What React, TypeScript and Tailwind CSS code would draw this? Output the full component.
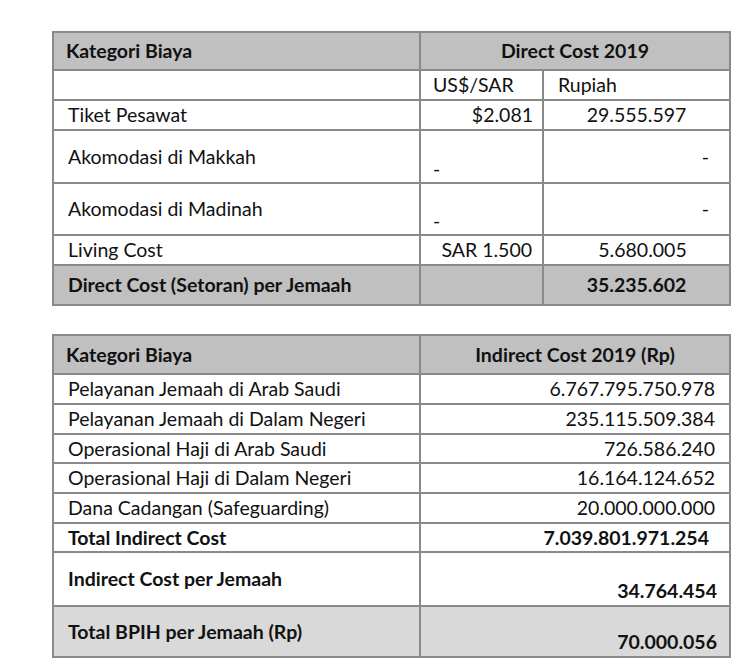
import React from "react";

type Row = { label: string; value: string; h: string };

const indirectRows: Row[] = [
  { label: "Pelayanan Jemaah di Arab Saudi", value: "6.767.795.750.978", h: "h-[30px]" },
  { label: "Pelayanan Jemaah di Dalam Negeri", value: "235.115.509.384", h: "h-[30px]" },
  { label: "Operasional Haji di Arab Saudi", value: "726.586.240", h: "h-[29px]" },
  { label: "Operasional Haji di Dalam Negeri", value: "16.164.124.652", h: "h-[30px]" },
  { label: "Dana Cadangan (Safeguarding)", value: "20.000.000.000", h: "h-[30px]" },
];

const cell = "border-2 border-[#8a8a8a] p-0";

export default function App() {
  return (
    <div
      className="w-[750px] h-[669px] bg-white text-[19.5px] leading-[1.2] text-[#111] pt-[31px] overflow-hidden"
      style={{ fontFamily: "Lato, 'Open Sans', sans-serif" }}
    >
      {/* Direct cost */}
      <table className="ml-[52px] w-[677px] border-collapse table-fixed">
        <colgroup>
          <col className="w-[367px]" />
          <col className="w-[123px]" />
          <col className="w-[187px]" />
        </colgroup>
        <tbody>
          <tr className="h-[38px] bg-[#c0c0c0] font-bold">
            <td className={`${cell} pl-3`}>Kategori Biaya</td>
            <td className={`${cell} text-center`} colSpan={2}>
              Direct Cost 2019
            </td>
          </tr>
          <tr className="h-[30px]">
            <td className={cell}></td>
            <td className={`${cell} pl-3`}>US$/SAR</td>
            <td className={`${cell} pl-[14px]`}>Rupiah</td>
          </tr>
          <tr className="h-[30px]">
            <td className={`${cell} pl-[14px]`}>Tiket Pesawat</td>
            <td className={`${cell} text-right pr-[9px]`}>$2.081</td>
            <td className={`${cell} text-center`}>29.555.597</td>
          </tr>
          <tr className="h-[53px]">
            <td className={`${cell} pl-[14px]`}>Akomodasi di Makkah</td>
            <td className={`${cell} pl-3 align-bottom pb-[2px]`}>-</td>
            <td className={`${cell} text-right pr-5`}>-</td>
          </tr>
          <tr className="h-[52px]">
            <td className={`${cell} pl-[14px]`}>Akomodasi di Madinah</td>
            <td className={`${cell} pl-3 align-bottom pb-[2px]`}>-</td>
            <td className={`${cell} text-right pr-5`}>-</td>
          </tr>
          <tr className="h-[30px]">
            <td className={`${cell} pl-[14px]`}>Living Cost</td>
            <td className={`${cell} text-right pr-[10px]`}>SAR 1.500</td>
            <td className={`${cell} text-center pl-3`}>5.680.005</td>
          </tr>
          <tr className="h-[40px] bg-[#c0c0c0] font-bold">
            <td className={`${cell} pl-[14px]`}>Direct Cost (Setoran) per Jemaah</td>
            <td className={cell}></td>
            <td className={`${cell} text-center`}>35.235.602</td>
          </tr>
        </tbody>
      </table>

      {/* Indirect cost */}
      <table className="ml-[52px] mt-[28px] w-[677px] border-collapse table-fixed">
        <colgroup>
          <col className="w-[367px]" />
          <col className="w-[310px]" />
        </colgroup>
        <tbody>
          <tr className="h-[39px] bg-[#c0c0c0] font-bold">
            <td className={`${cell} pl-3`}>Kategori Biaya</td>
            <td className={`${cell} text-center`}>Indirect Cost 2019 (Rp)</td>
          </tr>
          {indirectRows.map((r) => (
            <tr key={r.label} className={r.h}>
              <td className={`${cell} pl-[14px]`}>{r.label}</td>
              <td className={`${cell} text-right pr-[14px]`}>{r.value}</td>
            </tr>
          ))}
          <tr className="h-[29px] font-bold">
            <td className={`${cell} pl-[14px]`}>Total Indirect Cost</td>
            <td className={`${cell} text-right pr-[20px]`}>7.039.801.971.254</td>
          </tr>
          <tr className="h-[54px] font-bold">
            <td className={`${cell} pl-[14px]`}>Indirect Cost per Jemaah</td>
            <td className={`${cell} text-right pr-[12px] align-bottom pb-[3px]`}>34.764.454</td>
          </tr>
          <tr className="h-[51px] bg-[#d9d9d9] font-bold">
            <td className={`${cell} pl-[14px]`}>Total BPIH per Jemaah (Rp)</td>
            <td className={`${cell} text-right pr-[12px] align-bottom pb-[3px]`}>70.000.056</td>
          </tr>
        </tbody>
      </table>
    </div>
  );
}
